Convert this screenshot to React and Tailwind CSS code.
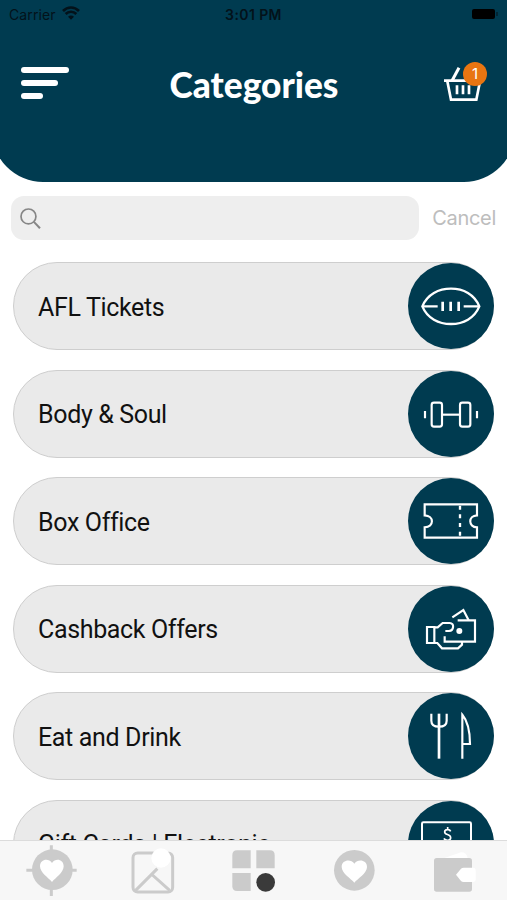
import { useState } from "react";

const AflIcon = () => (
  <svg viewBox="54 234 258 258" className="w-full h-full" fill="none" stroke="white" strokeWidth="7">
    <path d="M97 364C112 328 146 311 183 311S253 328 268 364C253 400 220 417 183 417S112 400 97 364Z" />
    <path d="M98 364H143M221 364H268" />
    <path d="M158 350V378M182 350V378M206 350V378" strokeWidth="8" />
  </svg>
);

const DumbbellIcon = () => (
  <svg viewBox="24 31 258 258" className="w-full h-full" fill="none" stroke="white" strokeWidth="6.5">
    <rect x="95" y="126" width="31" height="72" rx="7" />
    <rect x="180" y="126" width="31" height="72" rx="7" />
    <path d="M126 162H180" />
    <path d="M75 151V173M231 151V173" />
  </svg>
);

const TicketIcon = () => (
  <svg viewBox="24 25 258 258" className="w-full h-full" fill="none" stroke="white" strokeWidth="6.5">
    <path d="M74 104H231V137C204 138 204 172 231 173V204H74V173C103 172 103 138 74 137Z" />
    <path d="M180 108V203" strokeWidth="7" strokeDasharray="12 14" />
  </svg>
);

const CashIcon = () => (
  <svg viewBox="24 24 258 258" className="w-full h-full" fill="none" stroke="white" strokeWidth="6.5">
    <path d="M81 147H103V195H81Z" />
    <path d="M103 148H113L128 135H149C164 135 162 158 147 159H136" />
    <path d="M103 195H112L126 211H174L186 200V192" />
    <path d="M173 127H225V191H134V175" />
    <path d="M157 118L190 96L206 127" />
    <circle cx="178" cy="159" r="9" fill="white" stroke="none" />
  </svg>
);

const CutleryIcon = () => (
  <svg viewBox="24 25 258 258" className="w-full h-full" fill="none" stroke="white" strokeWidth="6.5">
    <path d="M94 87V108C94 120 101 126 117 126C133 126 140 120 140 108V87" />
    <path d="M117 87V222" strokeWidth="8" />
    <path d="M187 222V90C201 107 210 138 210 178H187" />
  </svg>
);

const GiftCardIcon = () => (
  <svg viewBox="465 33 258 258" className="w-full h-full" fill="none" stroke="white" strokeWidth="6">
    <rect x="507" y="97" width="147" height="96" rx="4" />
    <path d="M593 124C590 117 575 117 575 126C575 136 593 131 593 143C593 153 577 153 573 145M584 111V119M584 149V157" strokeWidth="5" />
  </svg>
);

const categories = [
  { name: "AFL Tickets", Icon: AflIcon },
  { name: "Body & Soul", Icon: DumbbellIcon },
  { name: "Box Office", Icon: TicketIcon },
  { name: "Cashback Offers", Icon: CashIcon },
  { name: "Eat and Drink", Icon: CutleryIcon },
  { name: "Gift Cards | Electronic...", Icon: GiftCardIcon },
];

const tabs = [
  {
    key: "nearby",
    icon: (
      <svg viewBox="62 153 180 177" className="w-[60px] h-[59px]">
        <path d="M153 166V318M78 241H229" stroke="#cbcbcb" strokeWidth="9" />
        <circle cx="156" cy="239" r="61" fill="#cbcbcb" />
        <path d="M155 276C145 264 119 248 119 229C119 207 145 203 155 219C165 203 190 207 190 229C190 248 165 264 155 276Z" fill="white" />
      </svg>
    ),
  },
  {
    key: "gallery",
    icon: (
      <svg viewBox="366 153 180 177" className="w-[60px] h-[59px]" fill="none" stroke="#cbcbcb" strokeWidth="9">
        <rect x="399" y="189" width="119" height="117" rx="14" />
        <path d="M407 301L472 236M454 252L509 301" />
        <circle cx="483" cy="204" r="29" fill="white" stroke="none" />
      </svg>
    ),
  },
  {
    key: "categories",
    icon: (
      <svg viewBox="672 153 180 177" className="w-[60px] h-[59px]" fill="#cbcbcb">
        <path d="M711 181H752V235H697V195Q697 181 711 181Z" />
        <path d="M769 181H810Q824 181 824 195V235H769Z" />
        <path d="M697 249H752V303H711Q697 303 697 289Z" />
        <circle cx="797" cy="277" r="28" fill="#3a3a3a" />
      </svg>
    ),
  },
  {
    key: "favourites",
    icon: (
      <svg viewBox="216 153 180 177" className="w-[60px] h-[59px]">
        <circle cx="304" cy="241" r="61" fill="#cbcbcb" />
        <path d="M304 278C294 266 266 250 266 231C266 209 294 206 304 221C314 206 342 209 342 231C342 250 314 266 304 278Z" fill="white" />
      </svg>
    ),
  },
  {
    key: "wallet",
    icon: (
      <svg viewBox="520 153 180 177" className="w-[60px] h-[59px]">
        <path d="M575 204L625 187Q642 187 645 204Z" fill="white" />
        <rect x="544" y="204" width="114" height="101" rx="8" fill="#cbcbcb" />
        <path d="M610 254L625 236Q628 233 633 233H661Q669 233 669 242V268Q669 276 661 276H633Q628 276 625 273Z" fill="white" />
      </svg>
    ),
  },
];

const StatusBar = () => (
  <div className="grid grid-cols-3 items-center h-7 pl-[17px] pr-[9px] -mx-2 font-['Inter',sans-serif] text-[14px] text-[#03121a]">
    <div className="flex items-center gap-[6px]">
      <span className="tracking-[0.1px]">Carrier</span>
      <svg viewBox="0 0 54 42" className="w-[18px] h-[14px] -mt-[3px]" fill="none" stroke="#03121a" strokeWidth="8">
        <path d="M3 15C17 1 37 1 51 15" />
        <path d="M11 24C20 15 34 15 43 24" />
        <path d="M27 41L18 32C23 27 31 27 36 32Z" fill="#03121a" stroke="none" />
      </svg>
    </div>
    <span className="text-center font-semibold text-[14px] tracking-[0.4px] -ml-2">3:01 PM</span>
    <div className="flex items-center justify-end gap-px pr-2">
      <div className="w-[23px] h-[10px] -mt-px bg-black rounded-[2px]" />
      <div className="w-[2px] h-1 bg-[#022635]" />
    </div>
  </div>
);

const Header = () => (
  <header className="shrink-0 h-[181.5px] -mx-2 px-2 bg-[#003b50] rounded-b-[51px]">
    <StatusBar />
    <div className="flex items-center justify-between h-[116px] pl-[21px] pr-[20px]">
      <button className="flex flex-col gap-[7px] w-[48px] -mt-[6px]">
        <span className="w-[48px] h-[6px] rounded-full bg-white" />
        <span className="w-[37px] h-[6px] rounded-full bg-white" />
        <span className="w-[22px] h-[6px] rounded-full bg-white" />
      </button>
      <h1 className="font-['Lato',sans-serif] font-black text-[35.3px] leading-none text-white -mt-[3px] -ml-[5px]">
        Categories
      </h1>
      <button className="relative w-[43px] h-[40px] -mt-[7px]">
        <svg viewBox="573 185 129 120" className="w-full h-full" fill="none" stroke="white" strokeWidth="8">
          <path d="M573 238H690" />
          <path d="M583 240L594 295H670L681 240" />
          <path d="M597 238L618 199" strokeWidth="9" />
          <path d="M612 252V279M630 252V279M648 252V279" />
        </svg>
        <span className="absolute -top-px right-0 w-6 h-6 rounded-full bg-[#e87511] text-white text-[15px] leading-6 text-center font-['Inter',sans-serif]">
          1
        </span>
      </button>
    </div>
  </header>
);

const CategoryRow = ({ name, Icon }) => (
  <li className="shrink-0 flex items-center justify-between h-[88px] pl-6 rounded-full border border-[#cecece] bg-[#eaeaea]">
    <span className="pt-[3px] font-['Roboto',sans-serif] text-[25px] tracking-[-0.35px] text-[#111] whitespace-nowrap">
      {name}
    </span>
    <span className="w-[86px] h-[86px] -mr-px rounded-full bg-[#003b50]">
      <Icon />
    </span>
  </li>
);

const App = () => {
  const [search, setSearch] = useState("");

  return (
    <div className="flex flex-col h-[900px] overflow-hidden bg-white">
      <Header />

      {/* Search */}
      <div className="shrink-0 flex items-center mt-[14.5px] h-11 pl-[11px] pr-[11px]">
        <label className="flex items-center w-[408px] h-11 pl-[9px] rounded-[13px] bg-[#eeeeee]">
          <svg viewBox="0 0 62 62" className="w-[21px] h-[21px]" fill="none" stroke="#868686" strokeWidth="5">
            <circle cx="25" cy="25" r="22" />
            <path d="M41 41L59 60" strokeWidth="6" />
          </svg>
          <input
            className="flex-1 px-2 bg-transparent outline-none"
            value={search}
            onChange={(e) => setSearch(e.target.value)}
          />
        </label>
        <button className="ml-auto font-['Inter',sans-serif] text-[20px] tracking-[-0.3px] text-[#bdbdbd]">
          Cancel
        </button>
      </div>

      {/* Category list */}
      <ul className="flex-1 min-h-0 overflow-hidden flex flex-col gap-[19.5px] mt-[22px] px-[13px]">
        {categories.map((category) => (
          <CategoryRow key={category.name} {...category} />
        ))}
      </ul>

      {/* Bottom tabs */}
      <nav className="shrink-0 flex h-[60px] border-t border-[#dcdcdc] bg-[#f7f7f7]">
        {tabs.map((tab) => (
          <button key={tab.key} className="flex-1 flex justify-center">
            {tab.icon}
          </button>
        ))}
      </nav>
    </div>
  );
};

export default App;
